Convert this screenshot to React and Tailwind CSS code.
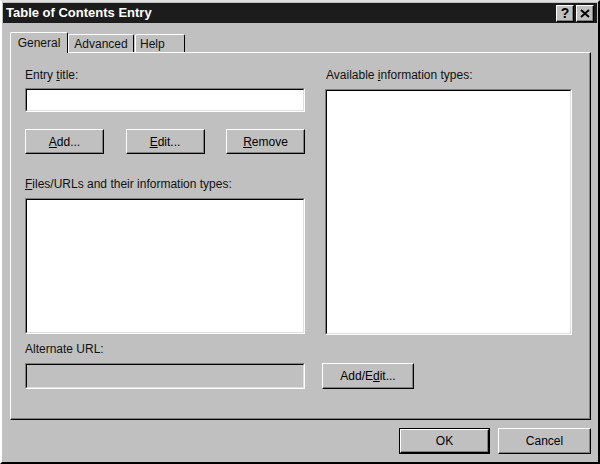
import React from 'react'

const font = { fontFamily: '"Liberation Sans", Arial, sans-serif' }

function Btn({ children, className = '', isDefault = false }) {
    return (
        <div className={`flex items-center justify-center bg-[#c0c0c0] text-[12px] text-black ${isDefault ? 'border border-black' : ''} ${className}`}>
            <div className="w-full h-full flex items-center justify-center border border-t-white border-l-white border-b-black border-r-black shadow-[inset_-1px_-1px_0_#808080]">
                {children}
            </div>
        </div>
    )
}

function Sunken({ className = '', children }) {
    return (
        <div className={`border border-t-[#808080] border-l-[#808080] border-b-white border-r-white ${className}`}>
            <div className="w-full h-full border border-t-black border-l-black border-b-[#dfdfdf] border-r-[#dfdfdf]">
                {children}
            </div>
        </div>
    )
}

function TitleBtn({ children }) {
    return (
        <div className="w-[18px] h-[17px] bg-[#c0c0c0] border border-t-white border-l-white border-b-black border-r-black shadow-[inset_-1px_-1px_0_#808080] flex items-center justify-center text-[14px] font-bold leading-none text-black">
            {children}
        </div>
    )
}

export default function App() {
    return (
        <div style={font} className="w-[600px] h-[464px] bg-[#c0c0c0] border-2 border-t-[#dfdfdf] border-l-white border-b-black border-r-black flex flex-col overflow-hidden">
            {/* Title bar */}
            <div className="h-[20px] mx-[1px] mt-[1px] bg-[#1c1c1c] flex items-center justify-between pl-[3px] pr-[3px]">
                <span className="text-white font-bold text-[13px]">Table of Contents Entry</span>
                <div className="flex gap-[2px]">
                    <TitleBtn>?</TitleBtn>
                    <TitleBtn>
                        <svg width="10" height="9" viewBox="0 0 10 9">
                            <path d="M1 1 L9 8 M9 1 L1 8" stroke="#000" strokeWidth="2" />
                        </svg>
                    </TitleBtn>
                </div>
            </div>

            {/* Tabs */}
            <div className="flex items-end pl-[8px] mt-[8px] h-[21px] text-[12px] text-[#111]">
                <div className="relative z-10 h-[21px] w-[58px] -mb-[1px] bg-[#c0c0c0] border-t border-l border-r border-t-white border-l-white border-r-black rounded-t-[2px] flex items-center justify-center pb-[1px]">
                    General
                </div>
                <div className="h-[18px] w-[66px] border-t border-l border-r border-t-white border-l-white border-r-black rounded-t-[2px] flex items-center justify-center">
                    Advanced
                </div>
                <div className="h-[18px] w-[50px] ml-[1px] border-t border-l border-r border-t-white border-l-white border-r-black rounded-t-[2px] flex items-center pl-[4px]">
                    Help
                </div>
            </div>

            {/* Panel */}
            <div className="ml-[8px] mr-[7px] h-[368px] border border-t-white border-l-white border-b-black border-r-black shadow-[inset_-1px_-1px_0_#808080] flex pl-[14px] pt-[15px] text-[12px] text-[#111]">
                {/* Left column */}
                <div className="w-[280px] flex flex-col">
                    <div className="h-[14px] leading-[14px]">Entry <u>t</u>itle:</div>
                    <Sunken className="mt-[6px] h-[24px] bg-white" />
                    <div className="mt-[17px] flex justify-between">
                        <Btn className="w-[79px] h-[25px]"><span><u>A</u>dd...</span></Btn>
                        <Btn className="w-[79px] h-[25px]"><span><u>E</u>dit...</span></Btn>
                        <Btn className="w-[79px] h-[25px]"><span><u>R</u>emove</span></Btn>
                    </div>
                    <div className="mt-[23px] h-[14px] leading-[14px]"><u>F</u>iles/URLs and their information types:</div>
                    <Sunken className="mt-[7px] h-[136px] bg-white" />
                    <div className="mt-[8px] h-[14px] leading-[14px]">Alternate URL:</div>
                    <Sunken className="mt-[7px] h-[26px] bg-[#c0c0c0]" />
                </div>

                {/* Right column */}
                <div className="ml-[20px] w-[247px] flex flex-col">
                    <div className="h-[14px] leading-[14px] pl-[1px]">Available <u>i</u>nformation types:</div>
                    <Sunken className="mt-[7px] h-[246px] bg-white" />
                    <Btn className="mt-[28px] -ml-[3px] w-[92px] h-[26px]"><span>Add/E<u>d</u>it...</span></Btn>
                </div>
            </div>

            {/* Footer */}
            <div className="flex justify-end gap-[8px] mt-[8px] pr-[7px]">
                <Btn isDefault className="w-[91px] h-[26px]">OK</Btn>
                <Btn className="w-[93px] h-[26px]">Cancel</Btn>
            </div>
        </div>
    )
}
